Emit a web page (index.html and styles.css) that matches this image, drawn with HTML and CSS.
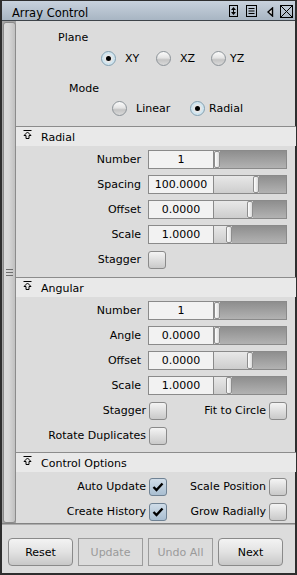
FILE: index.html
```html
<!DOCTYPE html>
<html lang="en">
<head>
  <meta charset="UTF-8">
  <meta name="viewport" content="width=device-width, initial-scale=1.0">
  <title>Array Control</title>
  <link rel="stylesheet" href="styles.css">
</head>
<body>
  <div class="window">
    <!-- title bar -->
    <div class="titlebar">
      <span class="title">Array Control</span>
      <div class="title-icons">
        <svg class="ti ti-swap" width="9" height="12" viewBox="0 0 9 12">
          <rect x="0.5" y="0.5" width="8" height="11" fill="none" stroke="#000"/>
          <path d="M4.5 2 L7 5 H2 Z M4.5 10 L7 7 H2 Z" fill="#000"/>
          <path d="M4.5 4 V8" stroke="#000"/>
        </svg>
        <svg class="ti ti-list" width="11" height="12" viewBox="0 0 11 12">
          <rect x="0.5" y="0.5" width="10" height="11" fill="none" stroke="#000"/>
          <path d="M2.5 3.5 H8.5 M2.5 6 H8.5 M2.5 8.5 H8.5" stroke="#000"/>
        </svg>
        <svg class="ti ti-back" width="7" height="10" viewBox="0 0 7 10">
          <path d="M5.5 1 V9 L1 5 Z" fill="#dcdcdc" stroke="#000" stroke-width="1.4"/>
        </svg>
        <svg class="ti ti-close" width="13" height="13" viewBox="0 0 13 13">
          <rect x="0.5" y="0.5" width="12" height="12" fill="none" stroke="#000"/>
          <path d="M1 1 L12 12 M12 1 L1 12" stroke="#000"/>
        </svg>
      </div>
    </div>

    <div class="main">
      <div class="gutter">
        <div class="handle"><div class="grip"></div></div>
      </div>

      <div class="content">
        <!-- plane / mode -->
        <div class="mode-box">
          <div class="group-label plane-label">Plane</div>
          <div class="radio-row plane-row">
            <div class="radio"><span class="dot on"></span><span class="rlabel">XY</span></div>
            <div class="radio"><span class="dot"></span><span class="rlabel">XZ</span></div>
            <div class="radio"><span class="dot"></span><span class="rlabel tight">YZ</span></div>
          </div>
          <div class="group-label mode-label">Mode</div>
          <div class="radio-row mode-row">
            <div class="radio radio-wide"><span class="dot"></span><span class="rlabel">Linear</span></div>
            <div class="radio"><span class="dot on"></span><span class="rlabel tight">Radial</span></div>
          </div>
        </div>

        <!-- radial -->
        <div class="frame">
          <div class="frame-head">
            <svg class="fold" width="9" height="9" viewBox="0 0 9 9">
              <path d="M0.5 0.5 H8.5" stroke="#000"/>
              <path d="M4.5 2 L8 5.5 H6 V8.5 H3 V5.5 H1 Z" fill="none" stroke="#000"/>
            </svg>
            Radial
          </div>
          <div class="frame-body radial-body">
            <div class="row">
              <span class="lbl">Number</span>
              <span class="field">1</span>
              <span class="slider"><span class="fill" style="width:0px"></span><span class="thumb"></span><span class="rest"></span></span>
            </div>
            <div class="row">
              <span class="lbl">Spacing</span>
              <span class="field">100.0000</span>
              <span class="slider"><span class="fill" style="width:39px"></span><span class="thumb"></span><span class="rest"></span></span>
            </div>
            <div class="row">
              <span class="lbl">Offset</span>
              <span class="field">0.0000</span>
              <span class="slider"><span class="fill" style="width:33px"></span><span class="thumb"></span><span class="rest"></span></span>
            </div>
            <div class="row">
              <span class="lbl">Scale</span>
              <span class="field">1.0000</span>
              <span class="slider"><span class="fill" style="width:12px"></span><span class="thumb"></span><span class="rest"></span></span>
            </div>
            <div class="row">
              <span class="lbl">Stagger</span>
              <span class="check"></span>
            </div>
          </div>
        </div>

        <!-- angular -->
        <div class="frame">
          <div class="frame-head">
            <svg class="fold" width="9" height="9" viewBox="0 0 9 9">
              <path d="M0.5 0.5 H8.5" stroke="#000"/>
              <path d="M4.5 2 L8 5.5 H6 V8.5 H3 V5.5 H1 Z" fill="none" stroke="#000"/>
            </svg>
            Angular
          </div>
          <div class="frame-body angular-body">
            <div class="row">
              <span class="lbl">Number</span>
              <span class="field">1</span>
              <span class="slider"><span class="fill" style="width:0px"></span><span class="thumb"></span><span class="rest"></span></span>
            </div>
            <div class="row">
              <span class="lbl">Angle</span>
              <span class="field">0.0000</span>
              <span class="slider"><span class="fill" style="width:0px"></span><span class="thumb"></span><span class="rest"></span></span>
            </div>
            <div class="row">
              <span class="lbl">Offset</span>
              <span class="field">0.0000</span>
              <span class="slider"><span class="fill" style="width:33px"></span><span class="thumb"></span><span class="rest"></span></span>
            </div>
            <div class="row">
              <span class="lbl">Scale</span>
              <span class="field">1.0000</span>
              <span class="slider"><span class="fill" style="width:12px"></span><span class="thumb"></span><span class="rest"></span></span>
            </div>
            <div class="row">
              <span class="lbl lbl-wide">Stagger</span>
              <span class="check"></span>
              <span class="lbl-right">Fit to Circle</span>
              <span class="check"></span>
            </div>
            <div class="row">
              <span class="lbl lbl-wide">Rotate Duplicates</span>
              <span class="check"></span>
            </div>
          </div>
        </div>

        <!-- control options -->
        <div class="frame frame-last">
          <div class="frame-head">
            <svg class="fold" width="9" height="9" viewBox="0 0 9 9">
              <path d="M0.5 0.5 H8.5" stroke="#000"/>
              <path d="M4.5 2 L8 5.5 H6 V8.5 H3 V5.5 H1 Z" fill="none" stroke="#000"/>
            </svg>
            Control Options
          </div>
          <div class="frame-body control-body">
            <div class="row">
              <span class="lbl lbl-wide">Auto Update</span>
              <span class="check on">
                <svg width="16" height="16" viewBox="0 0 16 16"><path d="M3.5 8 L6.5 11 L12.5 4.5" fill="none" stroke="#000" stroke-width="2.4"/></svg>
              </span>
              <span class="lbl-right">Scale Position</span>
              <span class="check"></span>
            </div>
            <div class="row">
              <span class="lbl lbl-wide">Create History</span>
              <span class="check on">
                <svg width="16" height="16" viewBox="0 0 16 16"><path d="M3.5 8 L6.5 11 L12.5 4.5" fill="none" stroke="#000" stroke-width="2.4"/></svg>
              </span>
              <span class="lbl-right">Grow Radially</span>
              <span class="check"></span>
            </div>
          </div>
        </div>
      </div>
    </div>

    <div class="sep"></div>

    <!-- buttons -->
    <div class="buttons">
      <button class="btn">Reset</button>
      <button class="btn" disabled>Update</button>
      <button class="btn" disabled>Undo All</button>
      <button class="btn">Next</button>
    </div>
  </div>
</body>
</html>
```

FILE: styles.css
```css
* {
  box-sizing: border-box;
}
body {
  margin: 0;
  font-family: "DejaVu Sans", sans-serif;
  font-size: 11px;
  color: #000;
  background: #dcdcdc;
}
.window {
  width: 297px;
  height: 575px;
  display: flex;
  flex-direction: column;
  border: 2px solid #2e2e2e;
  border-top-width: 1px;
  background: #dcdcdc;
}

/* title bar */
.titlebar {
  height: 20px;
  flex: none;
  display: flex;
  align-items: flex-start;
  padding: 4px 0 0 10px;
  border-bottom: 1px solid #3e444a;
  background: linear-gradient(#c8d2dd, #a8b5c3);
}
.title {
  font-size: 11.5px;
  line-height: 16px;
}
.title-icons {
  margin-left: auto;
  display: flex;
  align-items: flex-start;
  padding-right: 2px;
}
.ti-swap {
  margin-right: 8px;
}
.ti-list {
  margin-right: 10px;
}
.ti-back {
  margin: 2px 6px 0 0;
}

.main {
  flex: 1;
  display: flex;
  min-height: 0;
}

/* left drag gutter */
.gutter {
  width: 14px;
  flex: none;
  padding: 1px 0 0 1px;
  background: #a4a4a4;
}
.handle {
  height: 100%;
  border: 1px solid #8b8b8b;
  border-radius: 3px;
  background: linear-gradient(to right, #dadada 0, #d6d6d6 45%, #c0c0c0 100%);
  display: flex;
  align-items: center;
  justify-content: center;
}
.grip {
  width: 7px;
  height: 7px;
  background: repeating-linear-gradient(#6e6e6e 0 1px, transparent 1px 3px);
}

.content {
  flex: 1;
  display: flex;
  flex-direction: column;
}

/* plane / mode */
.mode-box {
  height: 105px;
  flex: none;
  padding-top: 10px;
}
.group-label {
  line-height: 13px;
}
.plane-label {
  padding-left: 42px;
}
.mode-label {
  padding-left: 53px;
  margin-top: 14px;
}
.radio-row {
  height: 19px;
  display: flex;
  align-items: center;
}
.plane-row {
  margin-top: 5px;
  padding-left: 85px;
}
.mode-row {
  margin-top: 4px;
  padding-left: 96px;
}
.radio {
  width: 55px;
  display: flex;
  align-items: center;
}
.radio-wide {
  width: 78px;
}
.dot {
  width: 15px;
  height: 15px;
  flex: none;
  border-radius: 50%;
  border: 1px solid #8c9398;
  background: linear-gradient(#fbfbfb, #e4e4e4 45%, #c4c4c4 60%, #dadada);
  position: relative;
}
.dot.on {
  border-color: #7f9fb2;
  background: #e6e6e6;
  box-shadow: inset 0 0 0 2px #cfe5f0;
}
.dot.on::after {
  content: "";
  position: absolute;
  left: 4px;
  top: 4px;
  width: 5px;
  height: 5px;
  border-radius: 50%;
  background: #000;
}
.rlabel {
  margin-left: 9px;
}
.rlabel.tight {
  margin-left: 4px;
}

/* collapsible frames */
.frame {
  flex: none;
}
.frame-last {
  flex: 1;
  display: flex;
  flex-direction: column;
}
.frame-head {
  height: 20px;
  display: flex;
  align-items: center;
  padding: 1px 0 0 7px;
  border-top: 1px solid #8c8c8c;
  background: #e9e9e9;
}
.fold {
  align-self: flex-start;
  margin: 2px 9px 0 0;
}
.frame-body {
  display: flex;
  flex-direction: column;
  gap: 6px;
  padding: 4px 9px 8px 0;
}
.angular-body {
  padding-bottom: 7px;
}
.control-body {
  flex: 1;
  padding-top: 5px;
  padding-bottom: 0;
}
.row {
  height: 19px;
  display: flex;
  align-items: center;
}
.lbl {
  width: 125px;
  flex: none;
  text-align: right;
  margin-right: 7px;
  white-space: nowrap;
}
.lbl-wide {
  width: 130px;
  margin-right: 3px;
}
.lbl-right {
  flex: 1;
  text-align: right;
  margin-right: 3px;
  white-space: nowrap;
}
.field {
  width: 66px;
  height: 19px;
  flex: none;
  border: 1px solid #8a8a8a;
  background: #f2f2f2;
  text-align: center;
  line-height: 17px;
}
.slider {
  width: 74px;
  height: 19px;
  flex: none;
  margin-left: -1px;
  border: 1px solid #8a8a8a;
  display: flex;
}
.fill {
  background: linear-gradient(#e8e8e8, #cdcdcd);
}
.thumb {
  width: 6px;
  flex: none;
  border: 1px solid #8e8e8e;
  border-radius: 2px;
  background: linear-gradient(to right, #fdfdfd, #dcdcdc);
}
.rest {
  flex: 1;
  background: linear-gradient(#8e8e8e, #b2b2b2);
}
.check {
  width: 18px;
  height: 18px;
  flex: none;
  border: 1px solid #8a8a8a;
  border-radius: 3px;
  background: linear-gradient(#f4f4f4, #dedede 50%, #c9c9c9);
  display: flex;
  align-items: center;
  justify-content: center;
}
.check.on {
  border-color: #6f8294;
  background: linear-gradient(#cfdce8, #a9bed1);
}

.sep {
  height: 2px;
  flex: none;
  border-top: 1px solid #838383;
  background: #adadad;
}

/* bottom buttons */
.buttons {
  height: 48px;
  flex: none;
  display: flex;
  gap: 5px;
  padding: 13px 0 0 6px;
}
.btn {
  width: 65px;
  height: 28px;
  border: 1px solid #8a8a8a;
  border-radius: 4px;
  background: linear-gradient(#f3f3f3, #e2e2e2 50%, #c8c8c8);
  font-family: "DejaVu Sans", sans-serif;
  font-size: 11px;
  color: #000;
  padding: 0;
}
.btn:disabled {
  border-color: #9c9c9c;
  border-radius: 0;
  background: #dcdcdc;
  color: #9a9a9a;
}
```
